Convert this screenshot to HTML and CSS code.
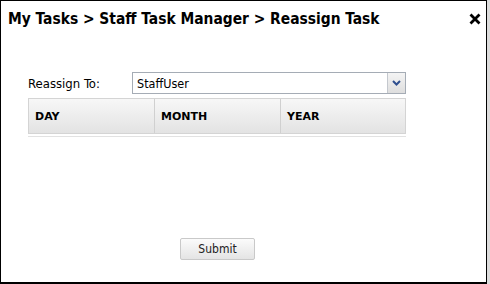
FILE: index.html
```html
<!DOCTYPE html>
<html lang="en">
<head>
    <meta charset="UTF-8">
    <meta name="viewport" content="width=device-width, initial-scale=1.0">
    <title>Reassign Task</title>
    <link rel="stylesheet" href="styles.css">
</head>
<body>
    <div class="dialog">
        <div class="title-bar">
            <span class="title">My Tasks &gt; Staff Task Manager &gt; Reassign Task</span>
            <span class="close">
                <svg width="12" height="12" viewBox="0 0 12 12">
                    <path d="M1.5 1.5 L10.5 10.5 M10.5 1.5 L1.5 10.5" stroke="#000" stroke-width="2.8" fill="none"/>
                </svg>
            </span>
        </div>

        <div class="content">
            <div class="form-row">
                <label class="label">Reassign To:</label>
                <div class="select">
                    <span class="select-value">StaffUser</span>
                    <span class="select-btn">
                        <svg width="9" height="6" viewBox="0 0 9 6">
                            <path d="M1 1 L4.5 4.5 L8 1" stroke="#2f4f8f" stroke-width="2" fill="none"/>
                        </svg>
                    </span>
                </div>
            </div>

            <div class="grid">
                <div class="grid-head">
                    <div class="col">DAY</div>
                    <div class="col">MONTH</div>
                    <div class="col">YEAR</div>
                </div>
                <div class="grid-foot"></div>
            </div>
        </div>

        <div class="actions">
            <button class="submit-btn">Submit</button>
        </div>
    </div>
</body>
</html>
```

FILE: styles.css
```css
body {
    margin: 0;
    background-color: #dcdcdc;
    font-family: "DejaVu Sans", Verdana, sans-serif;
}

.dialog {
    width: 487px;
    height: 284px;
    box-sizing: border-box;
    border: 1px solid #000;
    border-bottom-width: 2px;
    background-color: #fff;
    display: flex;
    flex-direction: column;
}

.title-bar {
    display: flex;
    justify-content: space-between;
    align-items: center;
    height: 30px;
    padding: 5px 5px 0 7px;
    box-sizing: border-box;
}

.title {
    font-family: "DejaVu Sans Condensed", "DejaVu Sans", sans-serif;
    font-weight: bold;
    font-size: 15.4px;
    color: #000;
}

.close {
    display: flex;
}

.content {
    padding: 41px 0 0 27px;
}

.form-row {
    display: flex;
    align-items: center;
}

.label {
    width: 104px;
    font-family: "DejaVu Sans Condensed", "DejaVu Sans", sans-serif;
    font-size: 13px;
    color: #000;
}

.select {
    width: 274px;
    height: 22px;
    box-sizing: border-box;
    border: 1px solid #a5acb5;
    display: flex;
    align-items: stretch;
}

.select-value {
    flex: 1;
    padding-left: 4px;
    display: flex;
    align-items: center;
    font-family: "DejaVu Sans Condensed", "DejaVu Sans", sans-serif;
    font-size: 12.5px;
}

.select-btn {
    width: 17px;
    border-left: 1px solid #c4c8ce;
    background: linear-gradient(#f4f4f4, #dedede);
    display: flex;
    align-items: center;
    justify-content: center;
}

.grid {
    width: 378px;
    margin-top: 4px;
}

.grid-head {
    display: grid;
    grid-template-columns: 125px 126px 127px;
    height: 36px;
    box-sizing: border-box;
    border: 1px solid #d4d4d4;
    background: linear-gradient(#f7f7f7, #e3e3e3);
}

.col {
    display: flex;
    align-items: center;
    padding-left: 6px;
    border-left: 1px solid #d0d0d0;
    font-size: 11px;
    font-weight: bold;
    color: #000;
}

.col:first-child {
    border-left: none;
}

.grid-foot {
    height: 2px;
    border-bottom: 1px solid #e2e2e2;
}

.actions {
    padding: 101px 0 0 179px;
}

.submit-btn {
    width: 75px;
    height: 22px;
    border: 1px solid #c9c9c9;
    border-radius: 2px;
    background: linear-gradient(#fbfbfb, #e4e4e4);
    font-family: "DejaVu Sans Condensed", "DejaVu Sans", sans-serif;
    font-size: 12px;
    color: #222;
    padding: 0;
}
```
